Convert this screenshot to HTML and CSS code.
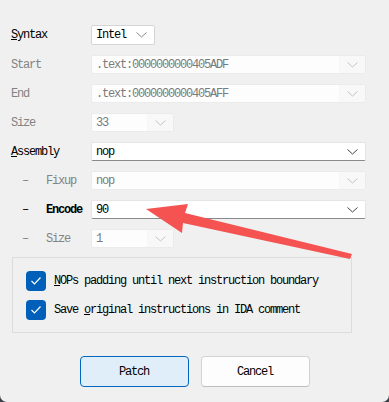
FILE: index.html
```html
<!DOCTYPE html>
<html lang="en">
  <head>
    <meta charset="UTF-8" />
    <title>Patch Bytes</title>
    <link rel="stylesheet" href="styles.css">
  </head>
  <body>
    <div class="dialog">
      <div class="form">
        <div class="row">
          <label class="label"><u>S</u>yntax</label>
          <div class="combo combo-small">
            <span class="value">Intel</span>
            <span class="chevron"><svg width="11" height="6" viewBox="0 0 11 6"><path d="M0.5 0.5 L5.5 5 L10.5 0.5" /></svg></span>
          </div>
        </div>
        <div class="row">
          <label class="label disabled">Start</label>
          <div class="combo disabled">
            <span class="value">.text:0000000000405ADF</span>
            <span class="chevron"><svg width="11" height="6" viewBox="0 0 11 6"><path d="M0.5 0.5 L5.5 5 L10.5 0.5" /></svg></span>
          </div>
        </div>
        <div class="row">
          <label class="label disabled">End</label>
          <div class="combo disabled">
            <span class="value">.text:0000000000405AFF</span>
            <span class="chevron"><svg width="11" height="6" viewBox="0 0 11 6"><path d="M0.5 0.5 L5.5 5 L10.5 0.5" /></svg></span>
          </div>
        </div>
        <div class="row">
          <label class="label disabled">Size</label>
          <div class="combo combo-size disabled">
            <span class="value">33</span>
            <span class="chevron"><svg width="11" height="6" viewBox="0 0 11 6"><path d="M0.5 0.5 L5.5 5 L10.5 0.5" /></svg></span>
          </div>
        </div>
        <div class="row">
          <label class="label"><u>A</u>ssembly</label>
          <div class="combo editable">
            <span class="value">nop</span>
            <span class="chevron"><svg width="11" height="6" viewBox="0 0 11 6"><path d="M0.5 0.5 L5.5 5 L10.5 0.5" /></svg></span>
          </div>
        </div>
        <div class="row">
          <label class="label sub disabled"><span class="dash">–</span>Fixup</label>
          <div class="combo disabled">
            <span class="value">nop</span>
            <span class="chevron"><svg width="11" height="6" viewBox="0 0 11 6"><path d="M0.5 0.5 L5.5 5 L10.5 0.5" /></svg></span>
          </div>
        </div>
        <div class="row">
          <label class="label sub bold"><span class="dash">–</span>Encode</label>
          <div class="combo editable">
            <span class="value">90</span>
            <span class="chevron"><svg width="11" height="6" viewBox="0 0 11 6"><path d="M0.5 0.5 L5.5 5 L10.5 0.5" /></svg></span>
          </div>
        </div>
        <div class="row">
          <label class="label sub disabled"><span class="dash">–</span>Size</label>
          <div class="combo combo-size disabled">
            <span class="value">1</span>
            <span class="chevron"><svg width="11" height="6" viewBox="0 0 11 6"><path d="M0.5 0.5 L5.5 5 L10.5 0.5" /></svg></span>
          </div>
        </div>
      </div>

      <div class="options">
        <label class="check">
          <span class="box"><svg width="12" height="10" viewBox="0 0 12 10"><path d="M1.5 5 L4.5 8 L10.5 1.5" /></svg></span>
          <span><u>N</u>OPs padding until next instruction boundary</span>
        </label>
        <label class="check">
          <span class="box"><svg width="12" height="10" viewBox="0 0 12 10"><path d="M1.5 5 L4.5 8 L10.5 1.5" /></svg></span>
          <span>Save <u>o</u>riginal instructions in IDA comment</span>
        </label>
      </div>

      <div class="buttons">
        <button class="btn primary">Patch</button>
        <button class="btn">Cancel</button>
      </div>

      <!-- annotation arrow drawn over the dialog -->
      <svg class="arrow" width="389" height="402" viewBox="0 0 389 402">
        <polygon points="146,209 188,204 185,213 352,254 350,259 183,223 182,233" />
      </svg>
    </div>
  </body>
</html>
```

FILE: styles.css
```css
html {
  background-color: #3b3f46;
}
body {
  margin: 0;
  font-family: 'Liberation Mono', 'DejaVu Sans Mono', monospace;
  font-size: 12px;
  letter-spacing: -1.2px;
  color: #000;
}
.dialog {
  position: relative;
  width: 389px;
  height: 402px;
  box-sizing: border-box;
  padding: 25px 23px 0 11px;
  background-color: #f0f0f0;
  border-radius: 0 0 7px 7px;
}
.form {
  display: flex;
  flex-direction: column;
  gap: 10px;
}
.row {
  display: flex;
  align-items: center;
  height: 19px;
}
.row:first-child {
  margin-bottom: 1px;
}
.label {
  width: 80px;
  flex-shrink: 0;
}
.label.disabled {
  color: #838383;
}
.label.sub {
  display: flex;
  padding-left: 11px;
  box-sizing: border-box;
}
.label.bold {
  font-weight: bold;
}
.dash {
  width: 24px;
  font-weight: normal;
}
.combo {
  flex: 1;
  display: flex;
  align-items: center;
  height: 19px;
  box-sizing: border-box;
  background-color: #fff;
  border: 1px solid #e3e3e3;
  border-radius: 2px;
}
.combo .value {
  flex: 1;
  padding-left: 4px;
  white-space: nowrap;
  overflow: hidden;
}
.combo .chevron {
  width: 26px;
  align-self: stretch;
  display: flex;
  align-items: center;
  justify-content: center;
}
.chevron path {
  fill: none;
  stroke: #454545;
  stroke-width: 1;
}
.combo-small {
  flex: none;
  width: 64px;
  height: 20px;
  border-color: #d5d5d5;
}
.combo-small .chevron path {
  stroke: #8a8a8a;
}
.combo-size {
  flex: none;
  width: 83px;
}
.combo.disabled {
  background-color: #fdfdfd;
  border-color: #ebebeb;
  color: #7a7a7a;
}
.combo.disabled .chevron {
  background-color: #f8f8f8;
}
.combo.disabled .chevron path {
  stroke: #c4c4c4;
}
.combo.editable {
  border-color: #e5e5e5;
  border-bottom-color: #8a8a8a;
}
.options {
  margin: 9px 14px 0 1px;
  height: 76px;
  box-sizing: border-box;
  border: 1px solid #dcdcdc;
  padding: 13px 13px 0;
  display: flex;
  flex-direction: column;
  gap: 9px;
}
.check {
  display: flex;
  align-items: center;
  gap: 8px;
  height: 20px;
}
.box {
  width: 20px;
  height: 20px;
  border-radius: 4px;
  background-color: #005fb8;
  display: flex;
  align-items: center;
  justify-content: center;
}
.box path {
  fill: none;
  stroke: #fff;
  stroke-width: 1.2;
}
.buttons {
  display: flex;
  justify-content: center;
  gap: 12px;
  margin-top: 23px;
  margin-left: 12px;
}
.btn {
  width: 109px;
  height: 31px;
  font-family: inherit;
  font-size: 12px;
  letter-spacing: -1.2px;
  color: #000;
  background-color: #fdfdfd;
  border: 1px solid #d3d3d3;
  border-bottom-color: #bdbdbd;
  border-radius: 4px;
}
.btn.primary {
  background-color: #e0eef9;
  border: 1px solid #0067c0;
}
.arrow {
  position: absolute;
  left: 0;
  top: 0;
  pointer-events: none;
}
.arrow polygon {
  fill: #f55252;
}
```
